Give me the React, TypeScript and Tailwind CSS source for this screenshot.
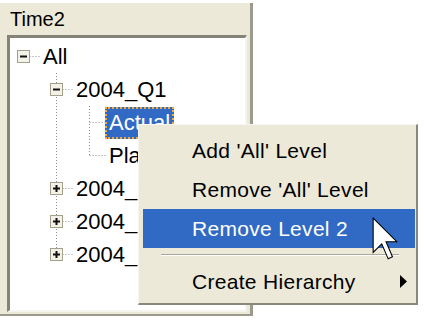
import React from "react";

type Cell = "empty" | "pass" | "tee" | "elbow" | "root";
type Row = { label: string; cells: Cell[]; box?: "minus" | "plus"; selected?: boolean };

const rows: Row[] = [
  { label: "All", cells: ["root"], box: "minus" },
  { label: "2004_Q1", cells: ["empty", "tee"], box: "minus" },
  { label: "Actual", cells: ["empty", "pass", "tee"], selected: true },
  { label: "Plan", cells: ["empty", "pass", "elbow"] },
  { label: "2004_Q2", cells: ["empty", "tee"], box: "plus" },
  { label: "2004_Q3", cells: ["empty", "tee"], box: "plus" },
  { label: "2004_Q4", cells: ["empty", "elbow"], box: "plus" },
];

const dot = { stroke: "#8e8e8e", strokeWidth: 1, strokeDasharray: "1 2" };

function TreeCell({ kind, box }: { kind: Cell; box?: "minus" | "plus" }) {
  return (
    <svg width="33" height="33" viewBox="0 0 33 33" className="shrink-0">
      {(kind === "pass" || kind === "tee") && <line x1="13.5" y1="0" x2="13.5" y2="33" {...dot} />}
      {kind === "elbow" && <line x1="13.5" y1="0" x2="13.5" y2="16.5" {...dot} />}
      {(kind === "tee" || kind === "elbow" || kind === "root") && (
        <line x1="13.5" y1="16.5" x2="31" y2="16.5" {...dot} />
      )}
      {box && (
        <g>
          <rect x="7.5" y="10.5" width="12" height="12" fill="#f4f2e8" stroke="#a3a08c" />
          <rect x="10" y="15.5" width="7" height="2" fill="#111" />
          {box === "plus" && <rect x="12.5" y="13" width="2" height="7" fill="#111" />}
        </g>
      )}
    </svg>
  );
}

function Cursor() {
  return (
    <svg width="27" height="44" viewBox="-0.5 -0.5 12.5 20.5" className="absolute left-[372px] top-[217px]">
      <path d="M0 0 L0 16 L4 12 L7 19 L9 18 L6 11 L11 11 Z" fill="#fff" stroke="#000" strokeWidth="0.5" strokeLinejoin="miter" />
    </svg>
  );
}

export default function App() {
  return (
    <div className="relative h-[322px] w-[425px] overflow-hidden bg-white font-['Liberation_Sans',Arial,sans-serif] text-black">
      <div className="mt-[3px] flex h-[313px] w-[253px] flex-col border-r-[3px] border-b-2 border-[#9c9a8d] bg-[#ECE9D8]">
        <div className="flex h-[32px] shrink-0 items-center pl-[10px] text-[20px] leading-none">Time2</div>
        <div className="ml-[7px] mr-[3px] h-[277px] shrink-0 overflow-hidden border-t-[3px] border-l-[3px] border-r-2 border-b-2 border-t-[#858377] border-l-[#858377] border-r-[#f5f4ee] border-b-[#f5f4ee] bg-white pt-[2px]">
          {rows.map((r) => (
            <div key={r.label} className="flex h-[33px] items-center">
              {r.cells.map((c, i) => (
                <TreeCell key={i} kind={c} box={i === r.cells.length - 1 ? r.box : undefined} />
              ))}
              {r.selected ? (
                <span className="-ml-[4px] bg-black">
                  <span className="flex h-[32px] items-center border-2 border-dotted border-[#f0a93c] bg-[#316AC5] px-[2px] text-[22px] leading-none text-white">
                    {r.label}
                  </span>
                </span>
              ) : (
                <span className="whitespace-nowrap text-[22px] leading-none">{r.label}</span>
              )}
            </div>
          ))}
        </div>
      </div>

      <div className="absolute left-[138px] top-[124px] h-[181px] w-[280px] border-t border-l border-r-2 border-b-2 border-t-[#f7f6f0] border-l-[#f7f6f0] border-r-[#8a887b] border-b-[#8a887b] bg-[#ECE9D8] pt-[6px] pl-[4px] pr-[1px] text-[21px] leading-none tracking-[0.3px]">
        <div className="flex h-[39px] items-center pl-[49px]">Add 'All' Level</div>
        <div className="flex h-[39px] items-center pl-[49px]">Remove 'All' Level</div>
        <div className="flex h-[39px] items-center bg-[#316AC5] pl-[49px] text-white">Remove Level 2</div>
        <div className="flex h-[14px] items-center pl-[18px] pr-[16px]">
          <div className="h-0 w-full border-t border-b border-t-[#aca899] border-b-white" />
        </div>
        <div className="flex h-[39px] items-center justify-between pl-[49px] pr-[8px]">
          <span>Create Hierarchy</span>
          <svg width="7" height="13" viewBox="0 0 7 13">
            <path d="M0 0 L7 6.5 L0 13 Z" fill="#000" />
          </svg>
        </div>
      </div>

      <Cursor />
    </div>
  );
}
